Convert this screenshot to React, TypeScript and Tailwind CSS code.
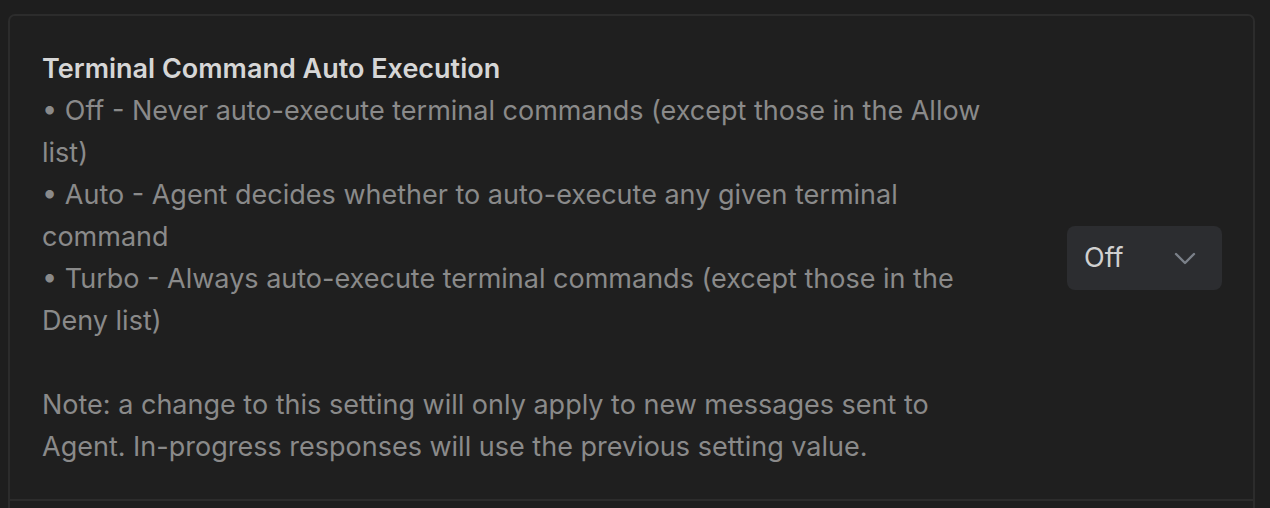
const font = { fontFamily: 'Inter, "Noto Sans", sans-serif' };

function Chevron() {
  return (
    <svg width="22" height="13" viewBox="0 0 22 13" fill="none">
      <path d="M2 2 L11 11 L20 2" stroke="#7b8089" strokeWidth="2.4" strokeLinecap="round" strokeLinejoin="round" />
    </svg>
  );
}

export default function App() {
  return (
    <div className="h-screen overflow-hidden bg-[#1e1e1e] pl-[8px] pr-[15px] pt-[14px]" style={font}>
      <div className="rounded-t-[7px] border-2 border-b-0 border-[#2c2c2c] bg-[#1f1f1f]">
        <div className="flex items-center justify-between pl-[32px] pr-[31px] pt-[32px] pb-[31px]">
          <div className="w-[965px] text-[27px] leading-[42px] text-[#8a8a8a]">
            <div className="font-semibold text-[#d6d6d6]">Terminal Command Auto Execution</div>
            <div>• Off - Never auto-execute terminal commands (except those in the Allow list)</div>
            <div>• Auto - Agent decides whether to auto-execute any given terminal command</div>
            <div>• Turbo - Always auto-execute terminal commands (except those in the Deny list)</div>
            <div className="h-[42px]" />
            <div>Note: a change to this setting will only apply to new messages sent to Agent. In-progress responses will use the previous setting value.</div>
          </div>
          <button className="flex h-[64px] w-[155px] items-center justify-between rounded-[8px] bg-[#2c2d30] pl-[17px] pr-[26px] text-[27px] text-[#d0d0d0]">
            <span>Off</span>
            <Chevron />
          </button>
        </div>
        <div className="h-[100px] border-t-2 border-[#2c2c2c]" />
      </div>
    </div>
  );
}
